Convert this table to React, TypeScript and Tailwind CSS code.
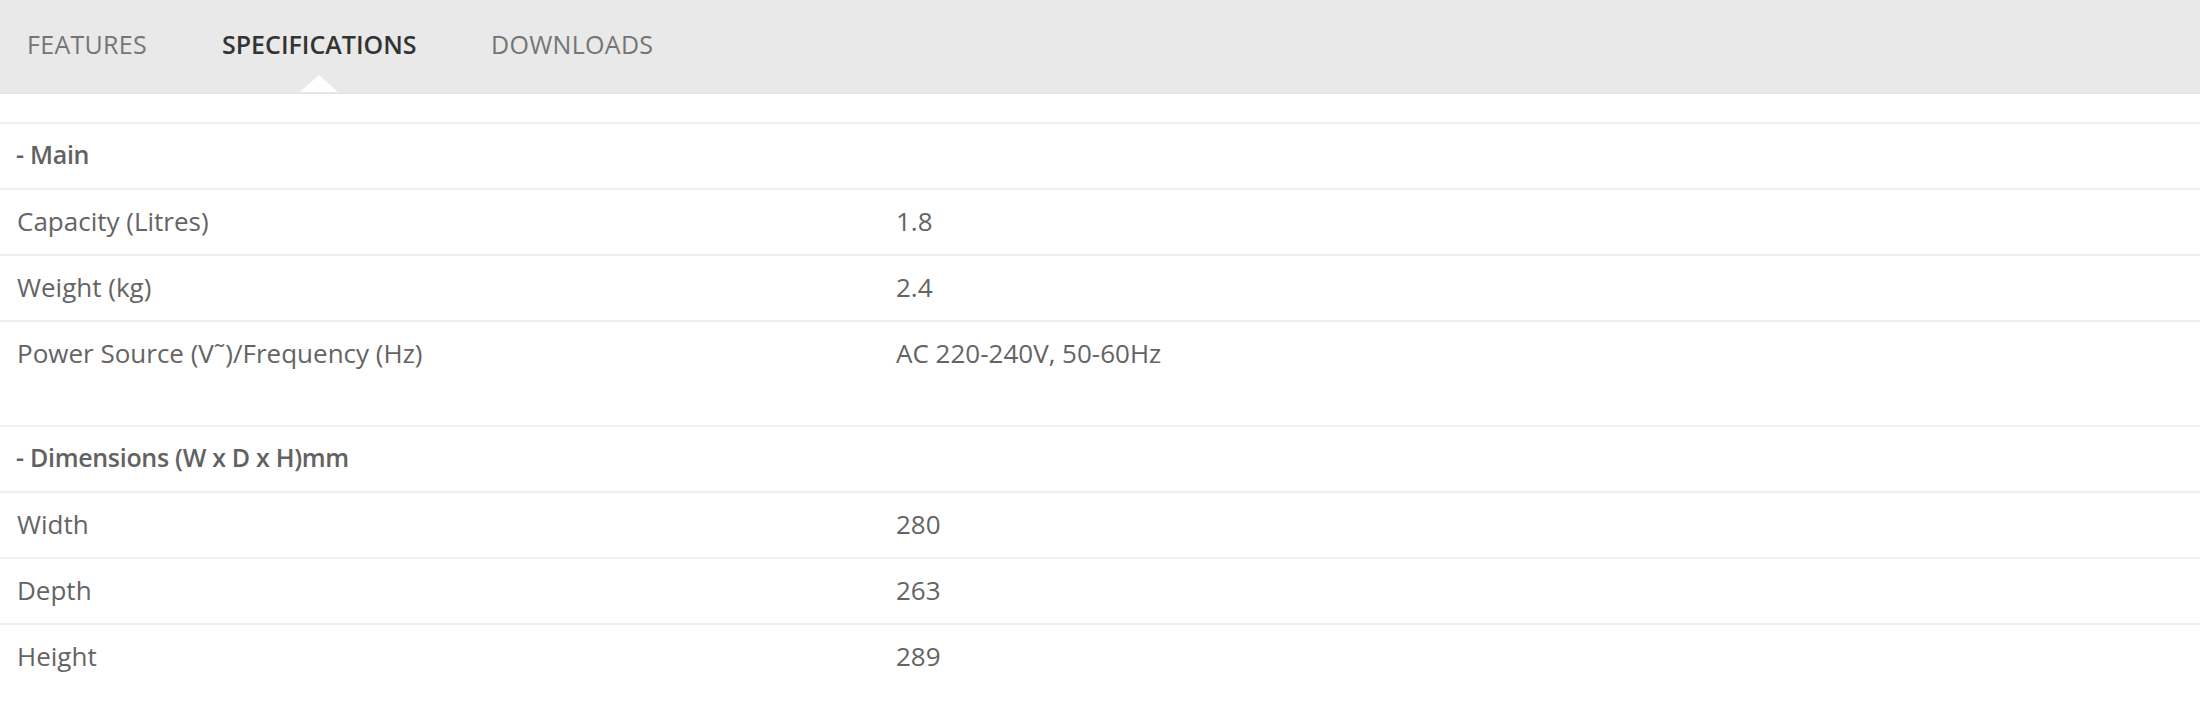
import React from 'react';

type Row = { label: string; value?: string; heading?: boolean; gapAfter?: boolean };

const tabs = [
  { name: 'FEATURES', active: false, width: 'w-[195px]' },
  { name: 'SPECIFICATIONS', active: true, width: 'w-[269px]' },
  { name: 'DOWNLOADS', active: false, width: 'w-[200px]' },
];

const rows: Row[] = [
  { label: '- Main', heading: true },
  { label: 'Capacity (Litres)', value: '1.8' },
  { label: 'Weight (kg)', value: '2.4' },
  { label: 'Power Source (V˜)/Frequency (Hz)', value: 'AC 220-240V, 50-60Hz', gapAfter: true },
  { label: '- Dimensions (W x D x H)mm', heading: true },
  { label: 'Width', value: '280' },
  { label: 'Depth', value: '263' },
  { label: 'Height', value: '289' },
];

export default function App() {
  return (
    <div className="w-[2200px] h-[702px] overflow-hidden bg-white font-['Open_Sans',sans-serif]">
      {/* Tab bar */}
      <div className="h-[94px] bg-[#e9e9e9] border-b border-[#e3e3e3] flex pl-[27px]">
        {tabs.map((tab) => (
          <div key={tab.name} className={`${tab.width} h-full flex items-center pb-[3px]`}>
            <div className="relative h-full flex items-center">
              <span
                className={
                  tab.active
                    ? 'text-[25px] font-semibold text-[#333]'
                    : 'text-[25px] text-[#757575] tracking-[0.3px]'
                }
              >
                {tab.name}
              </span>
              {tab.active && (
                <span className="absolute bottom-[-2px] left-1/2 -translate-x-1/2 w-0 h-0 border-l-[19px] border-r-[19px] border-b-[17px] border-l-transparent border-r-transparent border-b-white" />
              )}
            </div>
          </div>
        ))}
      </div>

      {/* Spec table */}
      <div className="pt-[28px]">
        {rows.map((row) => (
          <div key={row.label} className="border-t-2 border-[#efefef]">
            <div className="h-[64px] flex items-center pb-[2px] text-[26px] text-[#646464]">
              <div
                className={
                  row.heading
                    ? 'w-[896px] pl-[16px] text-[25px] font-semibold text-[#626262] tracking-[-0.3px]'
                    : 'w-[896px] pl-[17px]'
                }
              >
                {row.label}
              </div>
              {row.value && <div>{row.value}</div>}
            </div>
            {row.gapAfter && <div className="h-[39px]" />}
          </div>
        ))}
      </div>
    </div>
  );
}
